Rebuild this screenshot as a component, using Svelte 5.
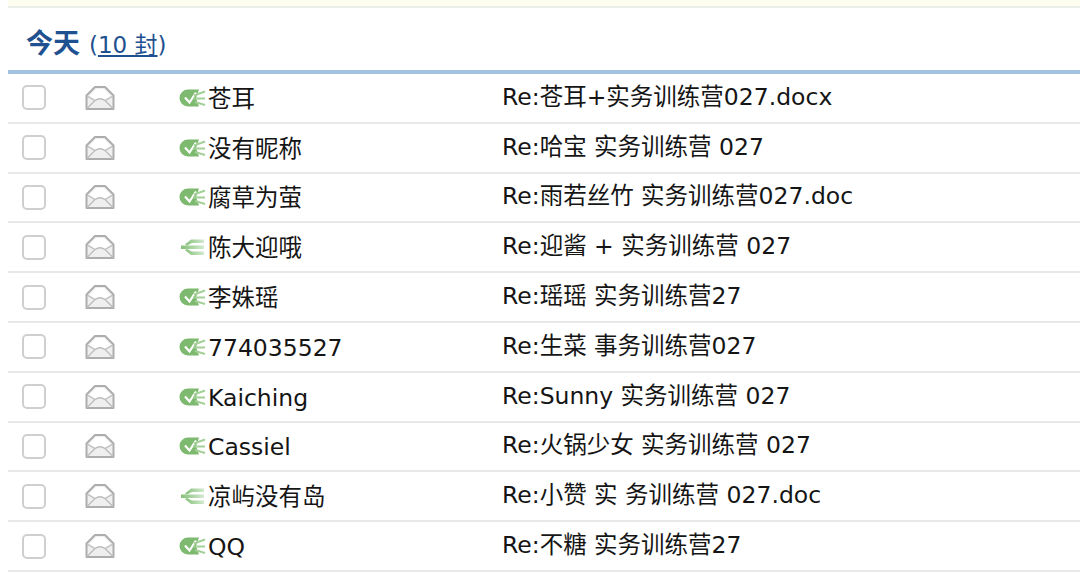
<script>
  const rows = [
    { name: '苍耳', subject: 'Re:苍耳+实务训练营027.docx', replied: true },
    { name: '没有昵称', subject: 'Re:哈宝 实务训练营 027', replied: true },
    { name: '腐草为萤', subject: 'Re:雨若丝竹 实务训练营027.doc', replied: true },
    { name: '陈大迎哦', subject: 'Re:迎酱 + 实务训练营 027', replied: false },
    { name: '李姝瑶', subject: 'Re:瑶瑶 实务训练营27', replied: true },
    { name: '774035527', subject: 'Re:生菜 事务训练营027', replied: true },
    { name: 'Kaiching', subject: 'Re:Sunny 实务训练营 027', replied: true },
    { name: 'Cassiel', subject: 'Re:火锅少女 实务训练营 027', replied: true },
    { name: '凉屿没有岛', subject: 'Re:小赞 实 务训练营 027.doc', replied: false },
    { name: 'QQ', subject: 'Re:不糖 实务训练营27', replied: true }
  ];
</script>

<div class="page">
  <div class="notice"></div>
  <div class="list">
    <h2 class="heading"><span>今天</span><span class="count">(<span class="link">10 封</span>)</span></h2>
    <div class="rows">
      {#each rows as row}
        <div class="row">
          <div class="check"><span class="box"></span></div>
          <div class="mail">
            <svg width="30" height="26" viewBox="0 0 30 26">
              <path d="M1.500 10.500 L10 2 H20 L28.500 10.500 V24 H1.500 Z" fill="#efefef" stroke="#adadad" stroke-width="2" stroke-linejoin="round"/>
              <path d="M4.500 10.500 L11 4 H19 L25.500 10.500 L20 15 Q15 12 10 15 Z" fill="#fff"/>
              <path d="M2 11 L10 15.500 Q15 12 20 15.500 L28 11 M2 23.500 L10 15.500 M28 23.500 L20 15.500" fill="none" stroke="#bcbcbc" stroke-width="1.300"/>
            </svg>
          </div>
          <div class="from">
            <svg class="status" width="28" height="20" viewBox="0 0 28 20">
              <defs>
                <linearGradient id="fade" x1="0" x2="1" y1="0" y2="0">
                  <stop offset="0" stop-color="#84c077"/>
                  <stop offset="1" stop-color="#d3ead0"/>
                </linearGradient>
              </defs>
              {#if row.replied}
                <path d="M9 1.500 H20 L17 10 L20 18.500 H9 A8.500 8.500 0 0 1 9 1.500 Z" fill="#7db96f"/>
                <path d="M6 9.500 L10.500 14.500 L17 4.500" fill="none" stroke="#fff" stroke-width="2.200"/>
                <path d="M14 10.500 H26 M15 7.500 L26 3.500 M16 14 L26 17" stroke="#a3d097" stroke-width="2" fill="none"/>
              {:else}
                <rect x="2" y="8.500" width="23" height="3.500" fill="url(#fade)"/>
                <path d="M6 7.500 L12 2.500 H25 V6 H13 L8 8.500 Z" fill="url(#fade)"/>
                <path d="M6 13 L12 18 H25 V14.500 H13 L8 12 Z" fill="url(#fade)"/>
              {/if}
            </svg>
            <span class="name">{row.name}</span>
          </div>
          <div class="subject">{row.subject}</div>
        </div>
      {/each}
    </div>
  </div>
</div>

<style>
  :global(body) {
    margin: 0;
    background: #fff;
  }
  .page {
    width: 1080px;
    height: 582px;
    overflow: hidden;
    font-family: "DejaVu Sans", "Noto Sans CJK SC", sans-serif;
    color: #151515;
  }
  .notice {
    height: 6px;
    margin-left: 8px;
    background: #fffdf0;
    border-bottom: 2px solid #eceeea;
  }
  .list {
    margin-left: 8px;
  }
  .heading {
    margin: 0;
    height: 66px;
    box-sizing: border-box;
    padding: 18px 0 0 18px;
    display: flex;
    align-items: baseline;
    gap: 9px;
    font-size: 27px;
    line-height: 36px;
    font-weight: 700;
    color: #1f5191;
    border-bottom: 4px solid #a3c2e0;
  }
  .count {
    font-size: 23px;
    font-weight: 400;
  }
  .link {
    text-decoration: underline;
  }
  .row {
    display: flex;
    align-items: center;
    height: 49.800px;
    box-sizing: border-box;
    border-bottom: 2px solid #e8e8e8;
    font-size: 23.500px;
    line-height: 30px;
    white-space: nowrap;
  }
  .check {
    width: 77px;
    padding-left: 14px;
    box-sizing: border-box;
    display: flex;
  }
  .box {
    width: 20px;
    height: 21px;
    border: 2px solid #cfcfcf;
    border-radius: 5px;
    background: #fff;
  }
  .mail {
    width: 94px;
    display: flex;
  }
  .mail svg {
    display: block;
  }
  .from {
    width: 324px;
    display: flex;
    align-items: center;
  }
  .status {
    flex: none;
    margin-right: 1px;
  }
  .name {
    padding-top: 2px;
  }
  .subject {
    padding-bottom: 2px;
    margin-left: -1px;
  }
</style>
